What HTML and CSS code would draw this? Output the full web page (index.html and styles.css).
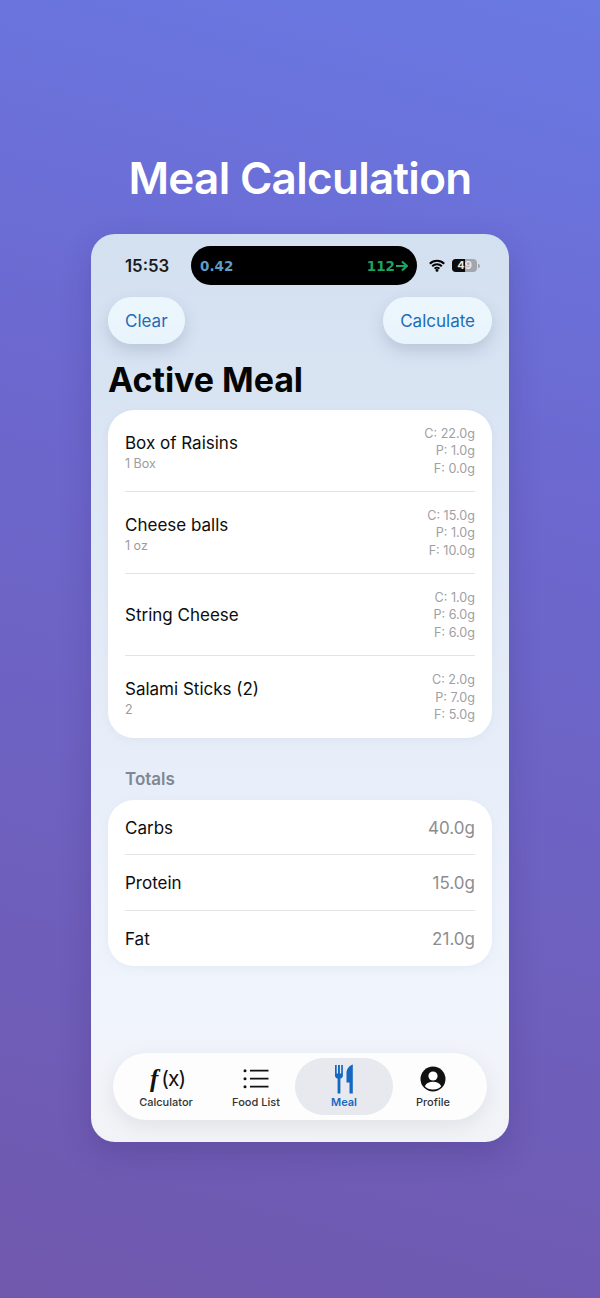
FILE: index.html
```html
<!DOCTYPE html>
<html lang="en">
<head>
<meta charset="utf-8">
<title>Meal Calculation</title>
<link rel="stylesheet" href="styles.css">
</head>
<body>
<h1 class="headline">Meal Calculation</h1>
<main class="phone">
  <div class="status">
    <span class="time">15:53</span>
    <div class="island"><span class="iob">0.42</span><span class="glucose">112<svg class="arrow" width="12" height="12" viewBox="0 0 12 12"><path d="M0 6H10.500M6 1.500L10.800 6L6 10.500" fill="none" stroke="#19a463" stroke-width="2.200"/></svg></span></div>
    <div class="status-icons">
      <svg class="wifi" width="16" height="13" viewBox="0 0 16 13"><path d="M0.800 4.700a10.400 10.400 0 0 1 14.400 0M3.200 7.300a6.900 6.900 0 0 1 9.600 0M5.600 9.700a3.400 3.400 0 0 1 4.800 0" fill="none" stroke="#000" stroke-width="2"/><circle cx="8" cy="11.400" r="1.400"/></svg>
      <div class="battery"><span class="battery-fill"></span><span class="battery-num">49</span></div>
      <span class="battery-tip"></span>
    </div>
  </div>
  <div class="actions">
    <button class="pill">Clear</button>
    <button class="pill">Calculate</button>
  </div>
  <h2 class="title">Active Meal</h2>
  <section class="card">
    <div class="item">
      <div class="item-main"><div class="item-name">Box of Raisins</div><div class="item-qty">1 Box</div></div>
      <div class="macros"><div>C: 22.0g</div><div>P: 1.0g</div><div>F: 0.0g</div></div>
    </div>
    <div class="item">
      <div class="item-main"><div class="item-name">Cheese balls</div><div class="item-qty">1 oz</div></div>
      <div class="macros"><div>C: 15.0g</div><div>P: 1.0g</div><div>F: 10.0g</div></div>
    </div>
    <div class="item">
      <div class="item-main"><div class="item-name">String Cheese</div></div>
      <div class="macros"><div>C: 1.0g</div><div>P: 6.0g</div><div>F: 6.0g</div></div>
    </div>
    <div class="item">
      <div class="item-main"><div class="item-name">Salami Sticks (2)</div><div class="item-qty">2</div></div>
      <div class="macros"><div>C: 2.0g</div><div>P: 7.0g</div><div>F: 5.0g</div></div>
    </div>
  </section>
  <div class="section-label">Totals</div>
  <section class="card">
    <div class="total"><span>Carbs</span><span class="total-val">40.0g</span></div>
    <div class="total"><span>Protein</span><span class="total-val">15.0g</span></div>
    <div class="total"><span>Fat</span><span class="total-val">21.0g</span></div>
  </section>
  <nav class="tabs">
    <div class="tab">
      <div class="tab-icon fx"><i>f</i><span>(x)</span></div>
      <span class="tab-label">Calculator</span>
    </div>
    <div class="tab">
      <svg class="tab-icon" width="26" height="26" viewBox="0 0 26 26"><circle cx="2" cy="4.700" r="1.500"/><circle cx="2" cy="12.700" r="1.500"/><circle cx="2" cy="20.700" r="1.500"/><path d="M7 4.700h18.500M7 12.700h18.500M7 20.700h18.500" stroke="#111" stroke-width="1.800"/></svg>
      <span class="tab-label">Food List</span>
    </div>
    <div class="tab tab-active">
      <svg class="tab-icon" width="18" height="30" viewBox="1 0 18 30"><path d="M1 1h1.700v8.500h1.300V1h1.900v8.500h1.300V1h1.700v10.500c0 1.700-1 2.700-2.500 3.100V29.500H3.600V14.600C2 14.200 1 13.200 1 11.500z"/><path d="M18.800 0.500V29.500h-3.300V18.500h-3V9C12.500 5 15.300 1.500 18.800 0.500z"/></svg>
      <span class="tab-label">Meal</span>
    </div>
    <div class="tab">
      <svg class="tab-icon" width="26" height="26" viewBox="0 0 26 26"><circle cx="13" cy="13" r="12.500" fill="#111"/><circle cx="13" cy="10" r="4.600" fill="#fff"/><path d="M4.800 20.200C6.500 16.900 9.500 15.800 13 15.800s6.500 1.100 8.200 4.400A10.500 10.500 0 0 1 13 23.500a10.500 10.500 0 0 1-8.200-3.300z" fill="#fff"/></svg>
      <span class="tab-label">Profile</span>
    </div>
  </nav>
</main>
</body>
</html>
```
FILE: styles.css
```css
* { box-sizing: border-box; }
html, body { margin: 0; height: 1298px; }
body {
  width: 600px;
  overflow: hidden;
  display: flex;
  flex-direction: column;
  align-items: center;
  background: linear-gradient(195deg, #6a79e3 0%, #6c68cf 35%, #7058ad 100%);
  font-family: Inter, "Liberation Sans", sans-serif;
  color: #0a0a0a;
}
.headline {
  margin: 150px 0 0;
  height: 84px;
  font-size: 44px;
  line-height: 56px;
  font-weight: 600;
  letter-spacing: -0.7px;
  color: #fff;
}
.phone {
  width: 418px;
  height: 908px;
  flex: none;
  padding: 12px 17px 0;
  border-radius: 24px;
  background: linear-gradient(180deg, #d3e0f0 0%, #e5ecf8 50%, #f0f4fc 85%, #f2f3f6 100%);
  box-shadow: 0 12px 30px rgba(50, 30, 100, 0.22);
  display: flex;
  flex-direction: column;
}
.status {
  height: 39px;
  display: flex;
  align-items: center;
  position: relative;
}
.time {
  margin-left: 17px;
  width: 66px;
  font-size: 16.800px;
  font-weight: 600;
  color: #1a1a1a;
}
.island {
  width: 226px;
  height: 39px;
  background: #000;
  border-radius: 20px;
  display: flex;
  justify-content: space-between;
  align-items: center;
  padding: 0 9px;
  font-family: "DejaVu Sans", sans-serif;
  font-size: 13.500px;
  font-weight: 700;
}
.iob { color: #5f9cc5; }
.glucose { color: #19a463; display: flex; align-items: center; }
.arrow { margin-left: 1px; }
.status-icons {
  margin-left: 12px;
  display: flex;
  align-items: center;
}
.wifi { margin-right: 7px; }
.battery {
  position: relative;
  width: 25px;
  height: 13px;
  border-radius: 4px;
  background: #a2a6ad;
  overflow: hidden;
  text-align: center;
}
.battery-fill {
  position: absolute;
  left: 0;
  top: 0;
  bottom: 0;
  width: 12.500px;
  background: #0c0c0c;
}
.battery-num {
  position: relative;
  font-size: 11px;
  line-height: 13px;
  font-weight: 700;
  color: #e8e8e8;
  display: block;
}
.battery-tip {
  width: 2px;
  height: 4px;
  margin-left: 1px;
  background: #a2a6ad;
  border-radius: 0 2px 2px 0;
}
.actions {
  margin-top: 12px;
  display: flex;
  justify-content: space-between;
}
.pill {
  height: 47px;
  padding: 0 17px;
  border: 0;
  border-radius: 24px;
  background: linear-gradient(180deg, #ecf6fd 0%, #e8f4fc 100%);
  box-shadow: 0 7px 16px rgba(90, 110, 140, 0.24);
  font: 400 17px Inter, "Liberation Sans", sans-serif;
  color: #1f6cb5;
}
.title {
  margin: 14px 0 9px;
  height: 43px;
  font-size: 34px;
  line-height: 43px;
  font-weight: 700;
  letter-spacing: -0.05px;
  color: #050505;
}
.card {
  background: #fff;
  border-radius: 26px;
  box-shadow: 0 2px 10px rgba(120, 140, 170, 0.08);
  padding: 0 17px;
}
.item {
  height: 82px;
  padding-top: 1px;
  display: flex;
  align-items: center;
  justify-content: space-between;
  border-bottom: 1px solid #e2e3e6;
}
.item:last-child { height: 82px; border-bottom: 0; }
.item-name {
  font-size: 17px;
  line-height: 24px;
  color: #0d0d0d;
}
.item-qty {
  font-size: 12.500px;
  line-height: 17px;
  color: #9c9c9f;
}
.macros {
  text-align: right;
  font-size: 12.600px;
  line-height: 17.500px;
  color: #a0a0a3;
}
.section-label {
  margin: 30px 0 9px 17px;
  height: 23px;
  font-size: 17px;
  line-height: 23px;
  font-weight: 600;
  color: #7f8893;
}
.total {
  height: 55.300px;
  padding-top: 1px;
  display: flex;
  align-items: center;
  justify-content: space-between;
  border-bottom: 1px solid #e2e3e6;
  font-size: 17px;
  color: #0d0d0d;
}
.total:last-child { border-bottom: 0; }
.total-val { color: #8d8d90; }
.tabs {
  margin: 87px 5px 0;
  height: 67px;
  padding: 5px 0 5px 2px;
  background: #fdfdfe;
  border-radius: 34px;
  box-shadow: 0 6px 18px rgba(120, 130, 150, 0.14);
  display: grid;
  grid-template-columns: 102px 78px 98px 80px;
  justify-content: start;
}
.tab {
  height: 57px;
  display: flex;
  flex-direction: column;
  align-items: center;
  justify-content: flex-end;
  padding-bottom: 6px;
  border-radius: 29px;
}
.tab-active {
  background: #e7e9ee;
}
.tab-icon { display: block; fill: #111; margin-bottom: 3px; }
.tab-active .tab-icon { fill: #1667c2; margin-bottom: 1px; }
.tab-label {
  font-size: 11px;
  line-height: 14px;
  font-weight: 500;
  color: #333;
}
.tab-active .tab-label { font-weight: 600; color: #1667c2; }
.fx {
  height: 26px;
  font-size: 21px;
  line-height: 26px;
  letter-spacing: -1px;
  color: #111;
  display: flex;
}
.fx i { font-family: "Liberation Serif", serif; font-weight: 700; font-size: 25px; margin: 0 4px 0 3px; }
```
